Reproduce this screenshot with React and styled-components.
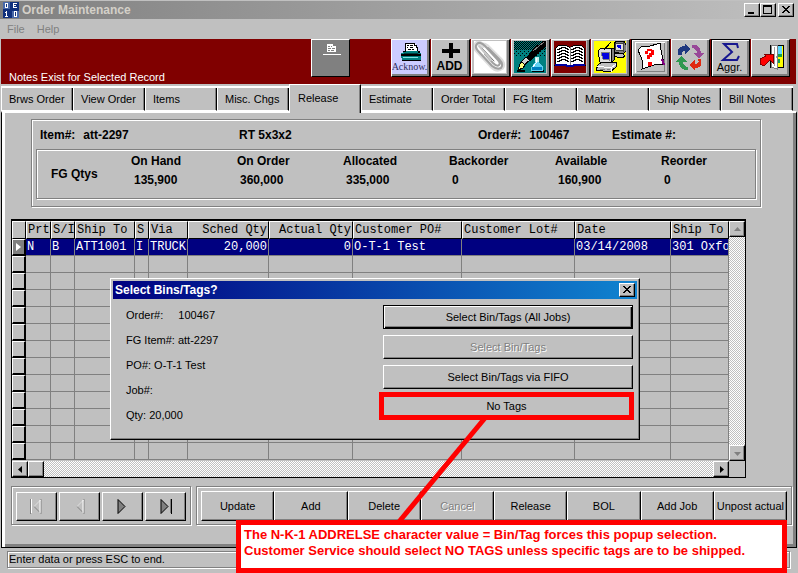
import React from "react";
import styled, { createGlobalStyle, css } from "styled-components";

const GlobalStyle = createGlobalStyle`
  *, *::before, *::after { box-sizing: border-box; }
  body { margin: 0; background: #c0c0c0; }
  body, button { font: 11px/14px "Liberation Sans", Arial, sans-serif; color: #000; }
  p, h1, h2, dl, dd { margin: 0; }
`;

const raised = css`
  background: #c0c0c0;
  border: 1px solid;
  border-color: #fff #000 #000 #fff;
  box-shadow: inset -1px -1px #808080;
`;

const groove = css`
  border: 1px solid #808080;
  box-shadow: inset 1px 1px #fff, 1px 1px #fff;
`;

const Window = styled.div`
  position: relative;
  display: flex;
  flex-direction: column;
  min-height: 100vh;
  background: #c0c0c0;
  overflow: hidden;
`;

const TitleBar = styled.header`
  display: flex;
  align-items: center;
  gap: 3px;
  height: 19px;
  padding: 0 4px 0 3px;
  border-top: 1px solid #c0c0c0;
  background: linear-gradient(90deg, #808080, #c0c0c0);
`;

const Title = styled.h1`
  flex: 1;
  color: #d4d0c8;
  font-size: 12px;
  line-height: 16px;
`;

const CaptionButtons = styled.div`
  display: flex;
`;

const CaptionButton = styled.button`
  ${raised}
  display: grid;
  place-items: center;
  width: 16px;
  height: 14px;
  padding: 0 1px 1px 0;
  & + &:last-child { margin-left: 2px; }
`;

const MenuBar = styled.nav`
  display: flex;
  gap: 12px;
  height: 20px;
  padding: 3px 7px;
`;

const MenuItem = styled.button`
  padding: 0;
  border: 0;
  background: none;
  color: #808080;
`;

const Toolbar = styled.div`
  display: flex;
  justify-content: space-between;
  height: 45px;
  margin: 0 2px 0 1px;
  padding-right: 6px;
  background: #800000;
`;

const ToolbarStart = styled.div`
  display: flex;
`;

const Message = styled.p`
  align-self: flex-end;
  width: 310px;
  padding-left: 8px;
  color: #fff;
`;

const ToolGroup = styled.div`
  display: flex;
  gap: 1px;
`;

const ToolButton = styled.button`
  ${raised}
  display: flex;
  flex-direction: column;
  align-items: center;
  width: 39px;
  height: 38px;
  padding: 1px 3px 2px 1px;
  background: ${(p) => p.$bg || "#c0c0c0"};
  box-shadow: inset -2px -2px #808080;
  overflow: hidden;
  svg { flex: none; display: block; }
  ${(p) =>
    p.$framed &&
    css`
      border-color: #000;
      box-shadow: inset 1px 1px #fff, inset -2px -2px #808080;
    `}
`;

const ToolLabel = styled.span`
  font: ${(p) => p.$font || '12px/11px "Liberation Sans", Arial, sans-serif'};
  color: ${(p) => p.$color || "#000"};
`;

const Tabs = styled.div`
  display: grid;
  grid-template-columns: repeat(11, minmax(0, 1fr));
  align-items: end;
  height: 27px;
  margin: 0 5px 0 1px;
  background: linear-gradient(#fff, #fff) 0 2px / 100% 2px no-repeat;
`;

const Tab = styled.button`
  height: 23px;
  padding: 0 7px;
  border: 0;
  border-left: 1px solid #fff;
  border-right: 1px solid #000;
  border-bottom: 1px solid #fff;
  box-shadow: inset -1px 0 #808080;
  background: #c0c0c0;
  text-align: left;
  white-space: nowrap;
  ${(p) =>
    p.$active &&
    css`
      position: relative;
      height: 29px;
      margin-bottom: -2px;
      padding: 0 8px 2px;
      border-top: 1px solid #fff;
      border-bottom: 0;
    `}
`;

const Page = styled.main`
  flex: 1;
  display: flex;
  flex-direction: column;
  margin: 0 1px;
  padding: 6px 0 0 6px;
  border: solid;
  border-width: 2px 1px 1px;
  border-color: #fff #000 #000;
  box-shadow: inset 3px 0 #fff, inset -3px -3px #808080;
`;

const InfoPanel = styled.section`
  ${groove}
  margin: 0 35px 0 23px;
  padding: 8px 4px 7px;
  font-size: 12px;
  font-weight: bold;
`;

const InfoLine = styled.dl`
  display: grid;
  grid-template-columns: 199px 239px 134px 1fr;
  height: 21px;
  padding-left: 4px;
  line-height: 14px;
`;

const Pair = styled.div`
  display: flex;
  gap: 8px;
`;

const QtyBox = styled.div`
  ${groove}
  display: grid;
  grid-template-columns: 80px 1fr;
  height: 50px;
  padding: 4px 0 0 14px;
`;

const QtyTitle = styled.h2`
  padding-top: 13px;
  font-size: 12px;
  line-height: 14px;
`;

const Quantities = styled.dl`
  display: grid;
  grid-template-columns: repeat(6, 106px);
  line-height: 14px;
  dd { padding: 5px 0 0 3px; }
`;

const Browse = styled.section`
  display: grid;
  grid-template-columns: minmax(0, 1fr) 16px;
  margin: 12px 50px 0 3px;
  border: solid #000;
  border-width: 2px 1px 1px;
`;

const Grid = styled.table`
  width: 100%;
  margin-bottom: 1px;
  table-layout: fixed;
  border-collapse: separate;
  border-spacing: 0;
  font: 12px/14px "Liberation Mono", "Courier New", monospace;
`;

const HeadCell = styled.th`
  height: 18px;
  padding: 0 1px;
  border: 1px solid;
  border-color: #fff #000 #000 #fff;
  font-weight: normal;
  text-align: ${(p) => (p.$right ? "right" : "left")};
  white-space: nowrap;
  overflow: hidden;
`;

const Cell = styled.td`
  height: 17px;
  padding: 0 1px;
  border: solid #808080;
  border-width: 0 1px 1px 0;
  text-align: ${(p) => (p.$right ? "right" : "left")};
  white-space: nowrap;
  overflow: hidden;
  background: ${(p) => (p.$selected ? "#000080" : "transparent")};
  color: ${(p) => (p.$selected ? "#fff" : "#000")};
`;

const Handle = styled.td`
  height: 17px;
  padding: 0;
  border: solid;
  border-width: 1px 2px 2px 1px;
  border-color: #fff #000 #000 #fff;
  background: ${(p) => (p.$selected ? "#808080" : "#c0c0c0")};
  svg { display: block; margin: 0 auto; }
`;

const track = css`
  display: flex;
  background: repeating-conic-gradient(#fff 0 25%, #c0c0c0 0 50%) 0 0 / 2px 2px;
`;

const VerticalScroll = styled.div`
  ${track}
  flex-direction: column;
  justify-content: space-between;
`;

const HorizontalScroll = styled.div`
  ${track}
`;

const ScrollButton = styled.button`
  ${raised}
  display: grid;
  place-items: center;
  width: 16px;
  height: 16px;
  padding: 0;
  margin-left: ${(p) => (p.$end ? "auto" : 0)};
`;

const Footer = styled.div`
  display: flex;
  gap: 5px;
  margin: 8px 4px 19px 3px;
`;

const NavGroup = styled.div`
  ${groove}
  display: flex;
  gap: 2px;
  padding: 5px 4px 4px;
  height: 39px;
`;

const NavButton = styled.button`
  ${raised}
  display: grid;
  place-items: center;
  width: 41px;
  height: 29px;
  padding: 0;
`;

const ActionGroup = styled.div`
  ${groove}
  flex: 1;
  display: grid;
  grid-template-columns: repeat(8, minmax(0, 1fr));
  padding: 4px 4px 3px;
  height: 39px;
`;

const disabledText = css`
  color: #808080;
  text-shadow: 1px 1px #fff;
`;

const ActionButton = styled.button`
  ${raised}
  height: 30px;
  padding: 0;
  white-space: nowrap;
  &:disabled { ${disabledText} }
`;

const StatusBar = styled.footer`
  height: 25px;
  padding: 3px 8px 4px 7px;
  p { ${groove} height: 17px; padding-left: 1px; line-height: 15px; }
`;

const Dialog = styled.section`
  position: absolute;
  left: 110px;
  top: 278px;
  width: 530px;
  padding: 2px;
  ${raised}
`;

const DialogTitle = styled.div`
  display: flex;
  align-items: center;
  justify-content: space-between;
  height: 18px;
  padding: 0 2px;
  background: linear-gradient(90deg, #000080, #1084d0);
  h2 { color: #fff; font-size: 12px; line-height: 16px; }
`;

const DialogBody = styled.div`
  display: grid;
  grid-template-columns: 1fr 250px;
  height: 138px;
  padding: 6px 4px 0 13px;
`;

const Details = styled.dl`
  div { display: flex; height: 25px; padding-top: 3px; gap: 3px; }
  div:first-child { gap: 15px; }
`;

const Choices = styled.div`
  display: flex;
  flex-direction: column;
  gap: 6px;
`;

const Choice = styled.button`
  ${raised}
  height: 24px;
  padding: 0;
  &:disabled { ${disabledText} }
  ${(p) =>
    p.$default &&
    css`
      border-color: #000;
      box-shadow: inset 1px 1px #fff, inset -1px -1px #000, inset -2px -2px #808080;
    `}
  ${(p) =>
    p.$marked &&
    css`
      height: 28px;
      margin: -3px -1px 0 -4px;
      border: 5px solid #f00;
      box-shadow: none;
    `}
`;

const Pointer = styled.svg`
  position: absolute;
  left: 394px;
  top: 416px;
`;

const Callout = styled.aside`
  position: absolute;
  left: 236px;
  top: 520px;
  width: 551px;
  height: 53px;
  padding: 2px 3px;
  border: 5px solid #f00;
  background: #fff;
  color: #f00;
  font-size: 13px;
  font-weight: bold;
  line-height: 16px;
  white-space: nowrap;
`;

const Crisp = ({ w = 32, h = 32, children }) => (
  <svg width={w} height={h} viewBox={`0 0 ${w} ${h}`} shapeRendering="crispEdges" fill="none" aria-hidden="true">
    {children}
  </svg>
);

const CloseGlyph = () => (
  <Crisp w={8} h={7}>
    <path d="M0 0h2v1h1v1h2V1h1V0h2v1H7v1H6v1H5v1h1v1h1v1h1v1H6V6H5V5H3v1H2v1H0V6h1V5h1V4h1V3H2V2H1V1H0z" fill="#000" />
  </Crisp>
);

const AppIcon = () => (
  <svg width="16" height="16" viewBox="0 0 16 16" shapeRendering="crispEdges" fill="none" aria-hidden="true">
    <path d="M0 0h16v16H0z" fill="#10307c" />
    <path d="M0 0h7v7H0zM9 9h7v7H9z" fill="#4868a8" />
    <path d="M2 1h3v5H2zM10 1h4v1h-3v1h2v1h-2v1h3v1h-4zM3 9h1v5h1v1H2v-1h1v-3H2v-1h1zM11 9h3v6h-3z" fill="#fff" />
    <path d="M3 2h1v3H3zM12 10h1v4h-1z" fill="#10307c" />
  </svg>
);

const ReportIcon = () => (
  <Crisp>
    <path d="M13 3h6v2h3v6h-9z" fill="#fff" />
    <path d="M14 5.500h2m1 0h1m-4 2h3m1 0h3m-7 2h2m1 0h3" stroke="#808080" />
    <path d="M9 13h18v1H9z" fill="#fff" />
  </Crisp>
);

const PrinterIcon = () => (
  <Crisp h={20}>
    <path d="M11 2h10l4 9H12z" fill="#fff" />
    <path d="M11.500 11V2.500h9v2h2v2h1V11" stroke="#000" />
    <path d="M13 4.500h2m1 0h3m-6 2h1m2 0h3m-5 2h3m1 0h2" stroke="#000" />
    <path d="M9 10h17v2h1v7H8v-2H7v-5h2z" fill="#008080" />
    <path d="M9 10h3v1H9zM24 10h2v2h-2zM7 13h20v2H7zM8 19h19v1H8z" fill="#000" />
    <path d="M10 12h14v1H10z" fill="#004040" />
    <path d="M9 16h15v1H9z" fill="#80e0e0" />
  </Crisp>
);

const PlusIcon = () => (
  <Crisp h={18}>
    <path d="M15 2h4v6h7v4h-7v5h-4v-5H8V8h7z" fill="#000" />
  </Crisp>
);

const ClipIcon = () => (
  <svg width="32" height="32" viewBox="0 0 32 32" fill="none" aria-hidden="true">
    <path d="M0 0h32v32H0z" fill="#fff" />
    <g strokeLinecap="round" strokeLinejoin="round">
      <path d="M9 5Q5-1 2 3q-2 3 1 7l14 15q6 6 11 2 3-4-2-9L13 5Q9 2 7 5" stroke="#ddd" strokeWidth="4" />
      <path d="M11 13l8 9q4 4 6 2t-2-6L11 5Q6 0 3 3T5 11l13 14q5 4 9 2 3-4-2-9L14 7" stroke="#a0a0a0" strokeWidth="2" />
      <path d="M8 7l12 13" stroke="#707070" />
      <path d="M5 5l12 14" stroke="#c8c8c8" strokeWidth="2" />
    </g>
  </svg>
);

const BrushIcon = () => (
  <Crisp>
    <defs>
      <pattern id="dots" width="4" height="4" patternUnits="userSpaceOnUse">
        <path d="M0 0h1v1H0zM2 2h1v1H2z" fill="#000" />
      </pattern>
      <pattern id="dense" width="2" height="2" patternUnits="userSpaceOnUse">
        <path d="M0 0h1v1H0zM1 1h1v1H1z" fill="#000" />
      </pattern>
    </defs>
    <path d="M0 0h32v32H0z" fill="#008080" />
    <path d="M0 0h32v9H0z" fill="url(#dense)" />
    <path d="M0 9h32v6H0z" fill="url(#dots)" />
    <path d="M32 0h-3L18 9l-5 7 3 4 5-4L32 4z" fill="#000" />
    <path d="M30 1L19 10" stroke="#808080" />
    <path d="M12 16l-6 6 3 3 7-6z" fill="#d0d0d0" stroke="#000" />
    <path d="M8 21l-2 2-2 6 5-2 2-3z" fill="#ffff80" stroke="#000" />
    <path d="M3 29h8v2H3zM19 29h11v2H18z" fill="#000" />
    <path d="M21 16h4v6h-4z" fill="#c0f0f0" />
    <path d="M21 21h4l4 5v4H17v-3z" fill="#60d0f0" />
    <path d="M18 26h10v3H18z" fill="#0080c0" />
    <path d="M22 17v5l-3 4" stroke="#fff" />
  </Crisp>
);

const BookIcon = () => (
  <Crisp>
    <path d="M0 0h32v32H0z" fill="#800000" />
    <path d="M2 7l3-3h6l4 2h2l4-2h6l3 3 1 17H19l-3 1-3-1H1z" fill="#fff" stroke="#000" />
    <path d="M16 6v18" stroke="#808080" />
    {[7, 10, 13, 16, 19].map((y) => (
      <path key={y} d={`M3 ${y + 1.5}h2v-1h2v-1h4v1h2v1h2m2 0h2v-1h2v-1h4v1h2v1h2`} stroke="#000" />
    ))}
    <path d="M1 23h12v1h6v-1h12v2H20v1h-8v-1H1z" fill="#0000a0" />
  </Crisp>
);

const ComputersIcon = () => (
  <Crisp>
    <path d="M0 0h32v32H0z" fill="#ff0" />
    <path d="M20 2l3-2h7l2 4v6l-3 3-8-2z" fill="#808080" stroke="#000" />
    <path d="M21 3l8-1v8l-7-1z" fill="#e0e0e0" stroke="#404040" />
    <path d="M23 4h4v4l-3-1z" fill="#0000e0" />
    <path d="M18 12l11 1 2 2-3 2-10-2z" fill="#c0c0c0" stroke="#000" />
    <path d="M16 7l4 1v11l-4 4z" fill="#808080" stroke="#000" />
    <path d="M4 10l3-3h10v14l-2 2-9-2z" fill="#e0e0e0" stroke="#000" />
    <path d="M7 11h8v8l-6-1z" fill="#0000e0" stroke="#808080" />
    <path d="M4 24l4-3h14v5l-6 5-14-2z" fill="#c0c0c0" stroke="#000" />
    <path d="M3 25l14 2 5-4M17 27v4" stroke="#fff" />
    <path d="M6 28h5m2 0h3" stroke="#808080" />
    <path d="M17 1L10 9" stroke="#000" />
  </Crisp>
);

const HelpDocIcon = () => (
  <Crisp>
    <path d="M1 32V1h30" stroke="#fff" />
    <path d="M30.500 2v28.500H3" stroke="#808080" />
    <path d="M8 5l5 1 13-4 1 7 3 14-10 1-12 4 1-7L4 9z" fill="#fff" stroke="#000" />
    <path d="M11 13v-3h2V8h5v1h2v5h-2v2h-2v2h-3v-4h2v-2h2v-2h-3v3zM14 21h4v4h-4z" fill="#f00" />
    <path d="M28 18l2 6" stroke="#800080" strokeWidth="2" />
  </Crisp>
);

const RecycleIcon = () => (
  <Crisp>
    <path d="M4 14q-2-9 7-9V2l5 6-5 5v-3q-5 0-3 4z" fill="#203880" />
    <path d="M18 4q8-1 9 8h3l-5 6-6-6h4q0-4-5-5z" fill="#984898" />
    <path d="M27 18q2 9-6 9v3l-6-6 6-5v4q5 0 3-5z" fill="#e02810" />
    <path d="M14 29q-9 0-9-8H2l5-6 6 6H9q0 4 5 5z" fill="#309850" />
  </Crisp>
);

const SigmaIcon = () => (
  <svg width="32" height="21" viewBox="0 0 32 21" fill="none" aria-hidden="true">
    <path d="M24 7l-1-4H10l8 8-9 8h14l2-4" stroke="#181890" strokeWidth="2" />
  </svg>
);

const ExitIcon = () => (
  <Crisp>
    <path d="M16 4h13v22H16z" fill="#ff0" stroke="#000" />
    <path d="M23 5h5v8h-5z" fill="#60d8ff" />
    <path d="M24 13h4v3h-4zM23 18h3v4h-3z" fill="#10a050" />
    <path d="M17 4h6v24l-6-2z" fill="#fff" stroke="#808080" />
    <path d="M20 6v19M22 15v2" stroke="#a0a0a0" />
    <path d="M6 18l6-3-2-2h9v9l-3-3-6 6-4-2z" fill="#f00" stroke="#800000" />
  </Crisp>
);

const Arrow = ({ dir, muted }) => {
  const shapes = { left: "M5 0v7L1 3.500z", right: "M2 0v7l4-3.500z", up: "M0 5h7L3.500 1z", down: "M0 2h7L3.500 6z" };
  return (
    <svg width="7" height="7" viewBox="0 0 7 7" aria-hidden="true">
      <path d={shapes[dir]} fill={muted ? "#808080" : "#000"} />
    </svg>
  );
};

const NavGlyph = ({ dir, bar, muted }) => {
  const ink = muted ? "#808080" : "#000";
  return (
    <svg width="15" height="17" viewBox="0 0 15 17" fill="none" aria-hidden="true">
      <g transform={dir === "left" ? "matrix(-1 0 0 1 15 0)" : undefined}>
        <path d="M3 1.500l7 7L3 15.500z" fill={muted ? "#c0c0c0" : "#808080"} stroke={ink} />
        {bar && <path d="M13.500 1v15" stroke={ink} />}
        {bar && <path d="M12.500 1v14" stroke={muted ? "#fff" : "#808080"} />}
        {muted && <path d="M10 8.500L3.500 2M4 15V2" stroke="#fff" />}
      </g>
    </svg>
  );
};

const tools = [
  { name: "Acknowledge", Icon: PrinterIcon, bg: "#ccccff", label: "Acknow.", font: '10px/12px "Liberation Serif", serif', color: "#303060" },
  { name: "Add", Icon: PlusIcon, label: "ADD", font: 'bold 12px/14px "Liberation Sans", Arial, sans-serif' },
  { name: "Attachments", Icon: ClipIcon },
  { name: "Notes", Icon: BrushIcon },
  { name: "Book", Icon: BookIcon },
  { name: "Computers", Icon: ComputersIcon },
  { name: "Help", Icon: HelpDocIcon, framed: true },
  { name: "Refresh", Icon: RecycleIcon },
  { name: "Aggregate", Icon: SigmaIcon, label: "Aggr.", framed: true, font: '11px/11px "Liberation Sans", Arial, sans-serif' },
  { name: "Exit", Icon: ExitIcon },
];

const tabs = ["Brws Order", "View Order", "Items", "Misc. Chgs", "Release", "Estimate", "Order Total", "FG Item", "Matrix", "Ship Notes", "Bill Notes"];

const quantities = [
  ["On Hand", "135,900"],
  ["On Order", "360,000"],
  ["Allocated", "335,000"],
  ["Backorder", "0"],
  ["Available", "160,900"],
  ["Reorder", "0"],
];

const columns = [
  { title: "Prt", width: 25, value: "N" },
  { title: "S/I", width: 24, value: "B" },
  { title: "Ship To", width: 60, value: "ATT1001" },
  { title: "S", width: 14, value: "I" },
  { title: "Via", width: 39, value: "TRUCK" },
  { title: "Sched Qty", width: 81, value: "20,000", right: true },
  { title: "Actual Qty", width: 84, value: "0", right: true },
  { title: "Customer PO#", width: 109, value: "O-T-1 Test" },
  { title: "Customer Lot#", width: 113, value: "" },
  { title: "Date", width: 96, value: "03/14/2008" },
  { title: "Ship To", value: "301 Oxfo" },
];

const actions = ["Update", "Add", "Delete", "Cancel", "Release", "BOL", "Add Job", "Unpost actual"];

const details = [
  ["Order#:", "100467"],
  ["FG Item#:", "att-2297"],
  ["PO#:", "O-T-1 Test"],
  ["Job#:", ""],
  ["Qty:", "20,000"],
];

export default function App() {
  return (
    <Window>
      <GlobalStyle />
      <TitleBar>
        <AppIcon />
        <Title>Order Maintenance</Title>
        <CaptionButtons>
          <CaptionButton aria-label="Minimize">
            <Crisp w={8} h={8}><path d="M0 6h6v2H0z" fill="#000" /></Crisp>
          </CaptionButton>
          <CaptionButton aria-label="Maximize">
            <Crisp w={9} h={9}><path d="M0 0h9v9H0zM1 2v6h7V2z" fill="#000" fillRule="evenodd" /></Crisp>
          </CaptionButton>
          <CaptionButton aria-label="Close"><CloseGlyph /></CaptionButton>
        </CaptionButtons>
      </TitleBar>
      <MenuBar>
        <MenuItem>File</MenuItem>
        <MenuItem>Help</MenuItem>
      </MenuBar>
      <Toolbar>
        <ToolbarStart>
          <Message>Notes Exist for Selected Record</Message>
          <ToolButton $bg="#808080" aria-label="Report"><ReportIcon /></ToolButton>
        </ToolbarStart>
        <ToolGroup>
          {tools.map(({ name, Icon, bg, label, font, color, framed }) => (
            <ToolButton key={name} $bg={bg} $framed={framed} aria-label={name}>
              <Icon />
              {label && <ToolLabel $font={font} $color={color}>{label}</ToolLabel>}
            </ToolButton>
          ))}
        </ToolGroup>
      </Toolbar>
      <Tabs role="tablist">
        {tabs.map((tab) => (
          <Tab key={tab} role="tab" aria-selected={tab === "Release"} $active={tab === "Release"}>{tab}</Tab>
        ))}
      </Tabs>
      <Page>
        <InfoPanel>
          <InfoLine>
            <Pair><dt>Item#:</dt><dd>att-2297</dd></Pair>
            <Pair><dd>RT 5x3x2</dd></Pair>
            <Pair><dt>Order#:</dt><dd>100467</dd></Pair>
            <Pair><dt>Estimate #:</dt></Pair>
          </InfoLine>
          <QtyBox>
            <QtyTitle>FG Qtys</QtyTitle>
            <Quantities>
              {quantities.map(([name, value]) => (
                <div key={name}><dt>{name}</dt><dd>{value}</dd></div>
              ))}
            </Quantities>
          </QtyBox>
        </InfoPanel>
        <Browse>
          <Grid>
            <colgroup>
              <col width={14} />
              {columns.map((c, i) => <col key={i} width={c.width} />)}
            </colgroup>
            <thead>
              <tr>
                <HeadCell />
                {columns.map((c, i) => <HeadCell key={i} $right={c.right}>{c.title}</HeadCell>)}
              </tr>
            </thead>
            <tbody>
              <tr>
                <Handle $selected>
                  <svg width="5" height="8" viewBox="0 0 5 8" aria-hidden="true"><path d="M0 0v8l5-4z" fill="#fff" /></svg>
                </Handle>
                {columns.map((c, i) => <Cell key={i} $selected $right={c.right}>{c.value}</Cell>)}
              </tr>
              {Array.from({ length: 12 }, (_, row) => (
                <tr key={row}>
                  <Handle />
                  {columns.map((c, i) => <Cell key={i} />)}
                </tr>
              ))}
            </tbody>
          </Grid>
          <VerticalScroll>
            <ScrollButton aria-label="Scroll up"><Arrow dir="up" muted /></ScrollButton>
            <ScrollButton aria-label="Scroll down"><Arrow dir="down" muted /></ScrollButton>
          </VerticalScroll>
          <HorizontalScroll>
            <ScrollButton aria-label="Scroll left"><Arrow dir="left" /></ScrollButton>
            <ScrollButton aria-label="Scroll position" />
            <ScrollButton $end aria-label="Scroll right"><Arrow dir="right" /></ScrollButton>
          </HorizontalScroll>
        </Browse>
        <Footer>
          <NavGroup>
            <NavButton disabled aria-label="First"><NavGlyph dir="left" bar muted /></NavButton>
            <NavButton disabled aria-label="Previous"><NavGlyph dir="left" muted /></NavButton>
            <NavButton aria-label="Next"><NavGlyph dir="right" /></NavButton>
            <NavButton aria-label="Last"><NavGlyph dir="right" bar /></NavButton>
          </NavGroup>
          <ActionGroup>
            {actions.map((a) => <ActionButton key={a} disabled={a === "Cancel"}>{a}</ActionButton>)}
          </ActionGroup>
        </Footer>
      </Page>
      <StatusBar><p>Enter data or press ESC to end.</p></StatusBar>
      <Dialog role="dialog" aria-labelledby="dialog-title">
        <DialogTitle>
          <h2 id="dialog-title">Select Bins/Tags?</h2>
          <CaptionButton aria-label="Close dialog"><CloseGlyph /></CaptionButton>
        </DialogTitle>
        <DialogBody>
          <Details>
            {details.map(([name, value]) => (
              <div key={name}><dt>{name}</dt><dd>{value}</dd></div>
            ))}
          </Details>
          <Choices>
            <Choice $default>Select Bin/Tags (All Jobs)</Choice>
            <Choice disabled>Select Bin/Tags</Choice>
            <Choice>Select Bin/Tags via FIFO</Choice>
            <Choice $marked>No Tags</Choice>
          </Choices>
        </DialogBody>
      </Dialog>
      <Pointer width="96" height="110" viewBox="0 0 96 110" aria-hidden="true">
        <path d="M91 2L4 107" stroke="#f00" strokeWidth="5" />
      </Pointer>
      <Callout>
        <p>The N-K-1 ADDRELSE character value = Bin/Tag forces this popup selection.</p>
        <p>Customer Service should select NO TAGS unless specific tags are to be shipped.</p>
      </Callout>
    </Window>
  );
}
